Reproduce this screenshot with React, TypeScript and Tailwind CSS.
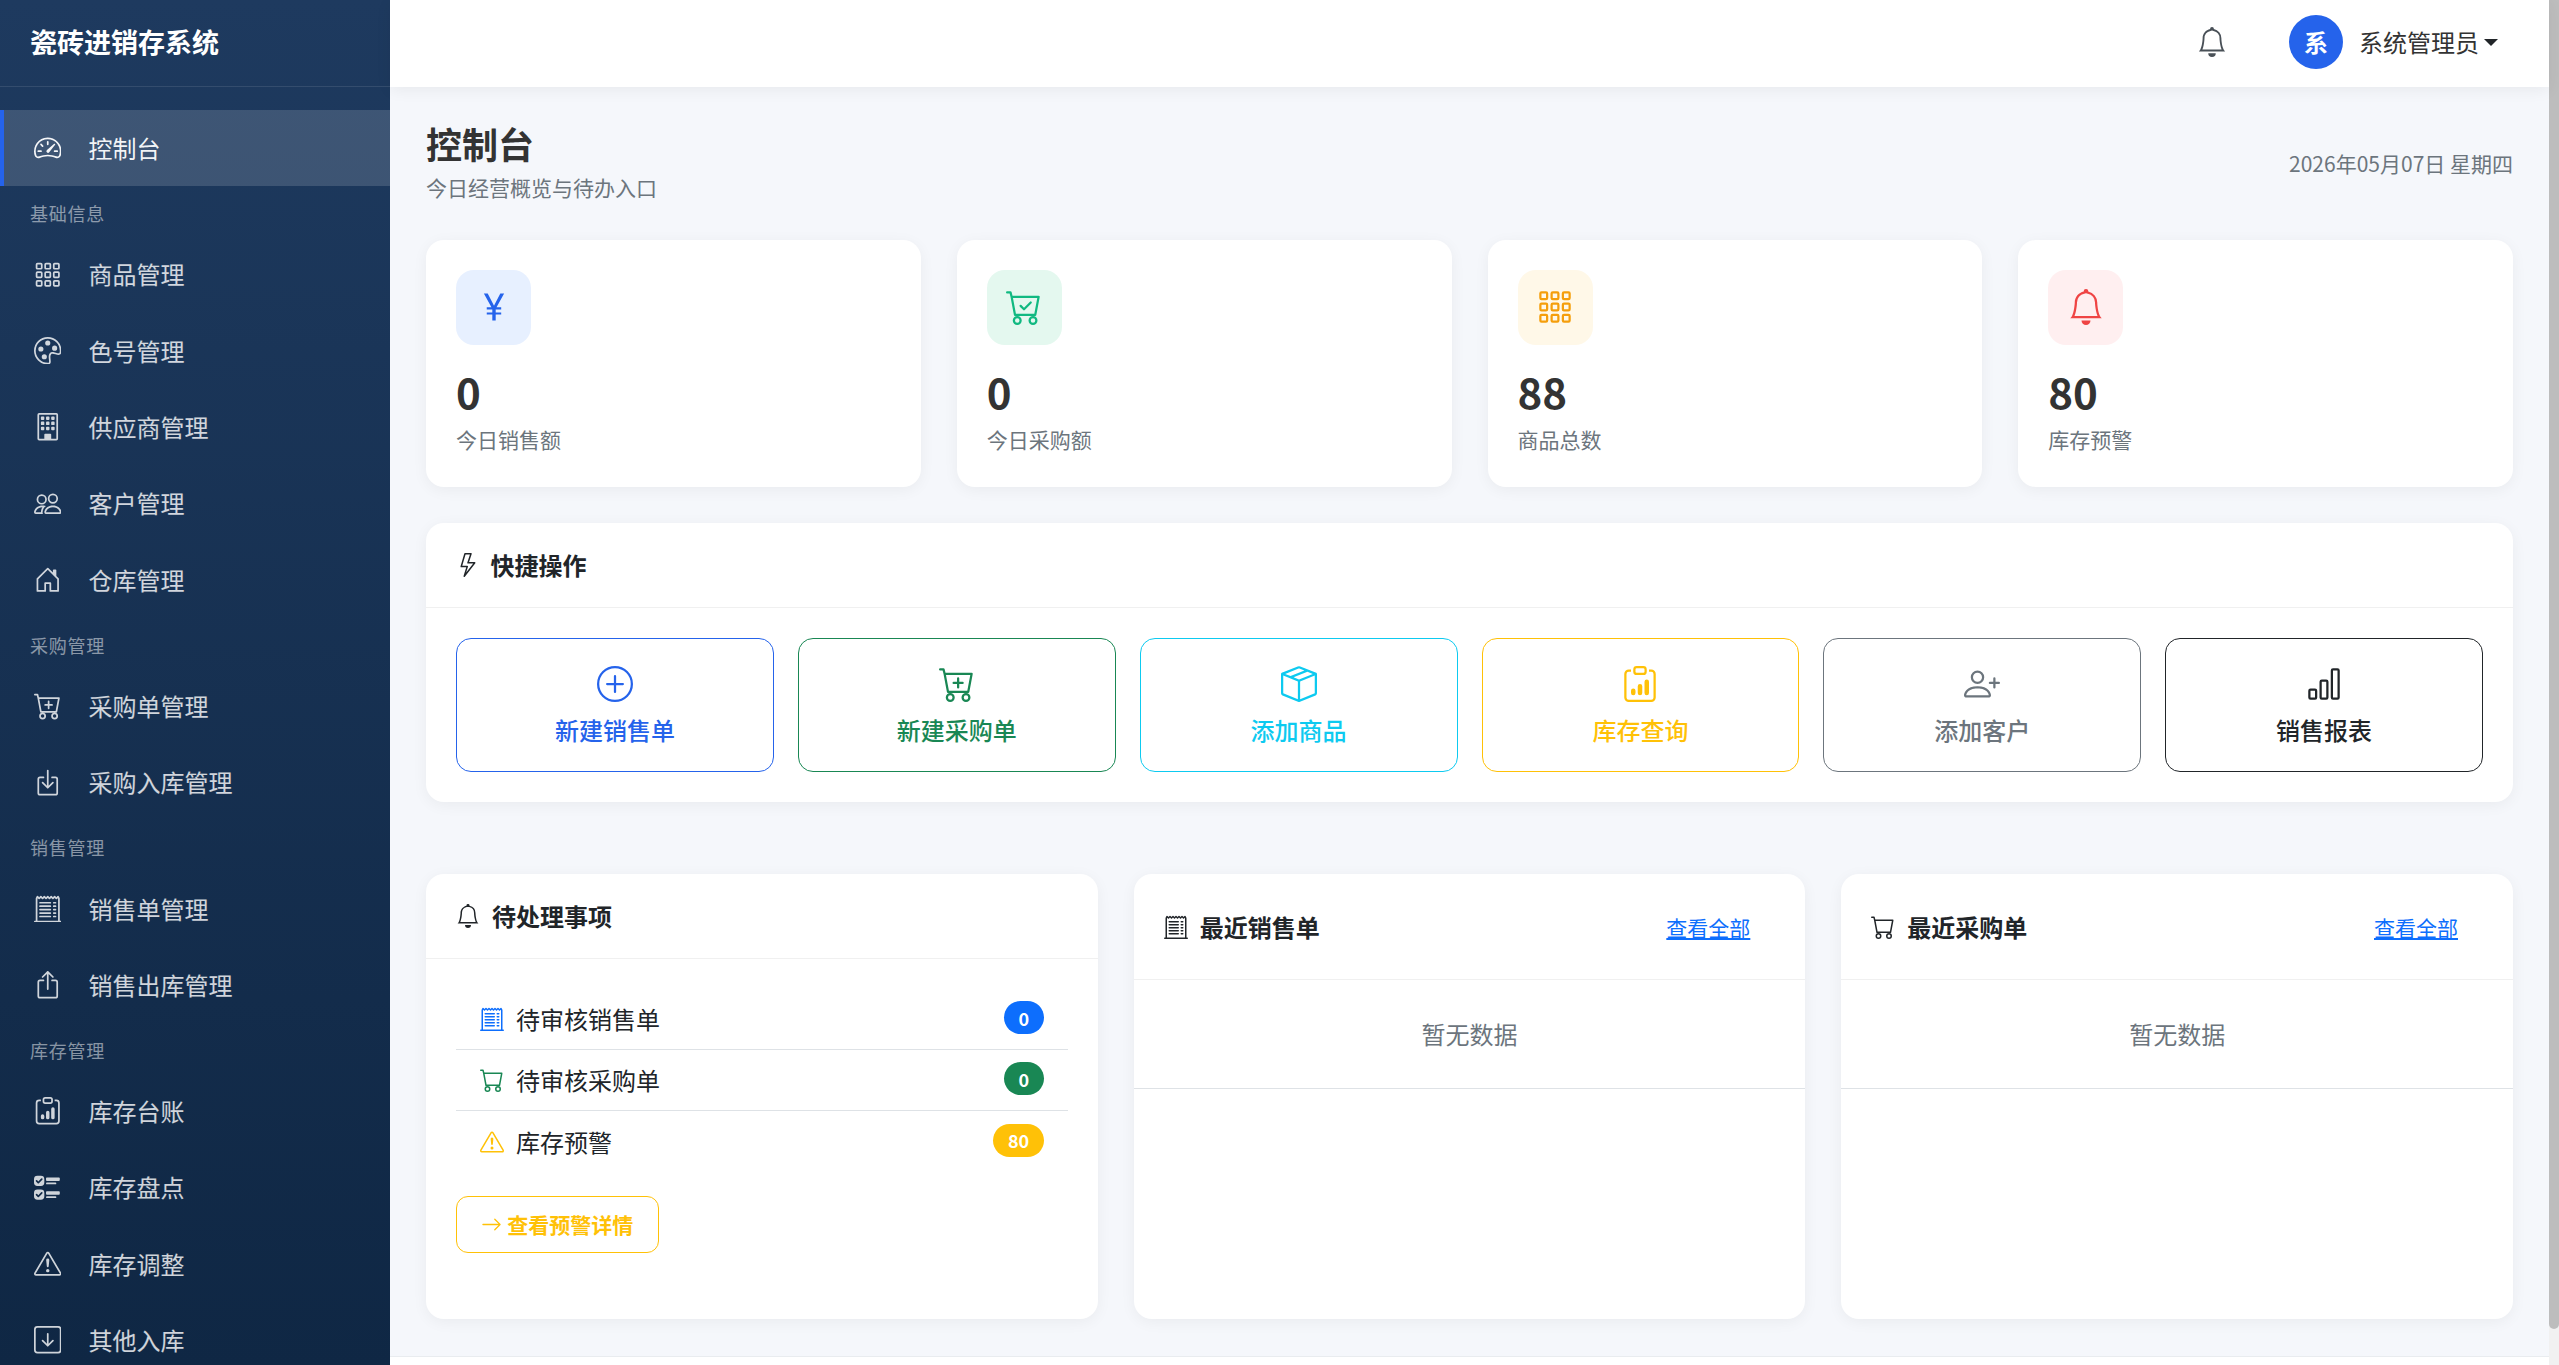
import React from "react";
import {
  BsSpeedometer2, BsGrid3X3Gap, BsPalette, BsBuilding, BsPeople, BsHouseDoor, BsCartPlus, BsBoxArrowInDown,
  BsReceiptCutoff, BsBoxArrowUp, BsClipboardData, BsUiChecks, BsExclamationTriangle, BsArrowDownSquare,
  BsBell, BsCurrencyYen, BsCartCheck, BsLightning, BsPlusCircle, BsBoxSeam, BsPersonPlus, BsBarChart, BsCart,
  BsArrowRight,
} from "react-icons/bs";

type NavEntry = { label: string; icon?: React.ComponentType<{ size?: number; className?: string }>; active?: boolean };

const nav: NavEntry[] = [
  { label: "控制台", icon: BsSpeedometer2, active: true },
  { label: "基础信息" },
  { label: "商品管理", icon: BsGrid3X3Gap },
  { label: "色号管理", icon: BsPalette },
  { label: "供应商管理", icon: BsBuilding },
  { label: "客户管理", icon: BsPeople },
  { label: "仓库管理", icon: BsHouseDoor },
  { label: "采购管理" },
  { label: "采购单管理", icon: BsCartPlus },
  { label: "采购入库管理", icon: BsBoxArrowInDown },
  { label: "销售管理" },
  { label: "销售单管理", icon: BsReceiptCutoff },
  { label: "销售出库管理", icon: BsBoxArrowUp },
  { label: "库存管理" },
  { label: "库存台账", icon: BsClipboardData },
  { label: "库存盘点", icon: BsUiChecks },
  { label: "库存调整", icon: BsExclamationTriangle },
  { label: "其他入库", icon: BsArrowDownSquare },
];

const stats = [
  { value: "0", label: "今日销售额", icon: BsCurrencyYen, box: "bg-[#e7f0ff] text-[#2563eb]" },
  { value: "0", label: "今日采购额", icon: BsCartCheck, box: "bg-[#e4f8ef] text-[#10b981]" },
  { value: "88", label: "商品总数", icon: BsGrid3X3Gap, box: "bg-[#fff8e8] text-[#f59e0b]" },
  { value: "80", label: "库存预警", icon: BsBell, box: "bg-[#ffeff0] text-[#ef4444]" },
];

const actions = [
  { label: "新建销售单", icon: BsPlusCircle, cls: "border-[#2563eb] text-[#2563eb]" },
  { label: "新建采购单", icon: BsCartPlus, cls: "border-[#198754] text-[#198754]" },
  { label: "添加商品", icon: BsBoxSeam, cls: "border-[#0dcaf0] text-[#0dcaf0]" },
  { label: "库存查询", icon: BsClipboardData, cls: "border-[#ffc107] text-[#ffc107]" },
  { label: "添加客户", icon: BsPersonPlus, cls: "border-[#6c757d] text-[#6c757d]" },
  { label: "销售报表", icon: BsBarChart, cls: "border-[#212529] text-[#212529]" },
];

const pending = [
  { label: "待审核销售单", count: "0", icon: BsReceiptCutoff, iconCls: "text-[#0d6efd]", badge: "bg-[#0d6efd]" },
  { label: "待审核采购单", count: "0", icon: BsCart, iconCls: "text-[#198754]", badge: "bg-[#198754]" },
  { label: "库存预警", count: "80", icon: BsExclamationTriangle, iconCls: "text-[#ffc107]", badge: "bg-[#ffc107]" },
];

const recent = [
  { title: "最近销售单", icon: BsReceiptCutoff },
  { title: "最近采购单", icon: BsCart },
];

const card = "bg-white rounded-[18px] shadow-[0_3px_15px_rgba(0,0,0,0.05)]";

export default function App() {
  return (
    <div className="flex h-screen w-full overflow-hidden bg-[#f5f7fb] font-['Noto_Sans_CJK_SC','Noto_Sans',sans-serif] text-[24px] leading-[36px] text-[#212529]">
      <aside className="flex h-full w-[390px] shrink-0 flex-col overflow-hidden bg-gradient-to-b from-[#1e3a5f] to-[#0f2744]">
        <div className="flex h-[87px] shrink-0 items-center border-b border-white/10 px-[30px] pb-[3px] text-[27px] font-bold text-white">
          瓷砖进销存系统
        </div>
        <nav className="shrink-0 pt-[23px]">
          {nav.map((n) =>
            n.icon ? (
              <div
                key={n.label}
                className={
                  n.active
                    ? "flex h-[76.3px] items-center border-l-[4.5px] border-[#2563eb] bg-white/15 pl-[25.5px] text-white/95"
                    : "flex h-[76.3px] items-center border-l-[4.5px] border-transparent pl-[25.5px] text-white/80"
                }
              >
                <span className="mr-[24px] flex w-[35px] justify-center pl-[1px]">
                  <n.icon size={27.5} />
                </span>
                {n.label}
              </div>
            ) : (
              <div key={n.label} className="h-[50px] pb-[9px] pl-[30px] pt-[14px] text-[18px] leading-[27px] tracking-[0.75px] text-white/50">
                {n.label}
              </div>
            ),
          )}
        </nav>
      </aside>

      <div className="flex h-full min-w-0 flex-1 flex-col">
        <header className="relative z-10 flex h-[87px] shrink-0 items-center justify-end bg-white pb-[3px] pr-[51px] shadow-[0_3px_15px_rgba(0,0,0,0.06)]">
          <BsBell size={30} className="mr-[62px] text-[#495057]" />
          <div className="mr-[16px] flex h-[54px] w-[54px] items-center justify-center rounded-full bg-[#2563eb] font-bold text-white">系</div>
          <span className="text-[#333333]">系统管理员</span>
          <span className="ml-[5px] h-0 w-0 border-x-[7px] border-t-[7px] border-x-transparent border-t-[#212529]" />
        </header>

        <main className="min-h-0 flex-1 overflow-hidden p-9">
          <div className="flex items-center justify-between">
            <div>
              <h1 className="-mt-[1.5px] text-[36px] font-bold leading-[43px] text-[#333333]">控制台</h1>
              <p className="mt-[7.5px] text-[21px] leading-[31.5px] text-[#6c757d]">今日经营概览与待办入口</p>
            </div>
            <div className="text-[21px] leading-[31.5px] text-[#6c757d]">2026年05月07日 星期四</div>
          </div>

          <div className="mt-9 grid grid-cols-4 gap-9">
            {stats.map((s) => (
              <div key={s.label} className={`${card} p-[30px]`}>
                <div className={`flex h-[75px] w-[75px] items-center justify-center rounded-[18px] ${s.box}`}>
                  <s.icon size={36} />
                </div>
                <div className="mt-[21px] text-[42px] font-bold leading-[50.5px] text-[#333333]">{s.value}</div>
                <div className="mb-[1px] mt-[8px] text-[21px] leading-[31.5px] text-[#6c757d]">{s.label}</div>
              </div>
            ))}
          </div>

          <section className={`${card} mt-9`}>
            <div className="flex h-[85.5px] items-center border-b-[1.5px] border-[#f0f0f0] px-[30px] font-semibold">
              <BsLightning size={24} className="mr-[10.5px]" />
              快捷操作
            </div>
            <div className="grid grid-cols-6 gap-6 p-[30px]">
              {actions.map((a) => (
                <div key={a.label} className={`flex h-[134px] flex-col items-center rounded-[15px] border-[1.5px] bg-white pt-[27px] font-medium ${a.cls}`}>
                  <a.icon size={36} />
                  <span className="mt-[10px]">{a.label}</span>
                </div>
              ))}
            </div>
          </section>

          <div className="mt-[72px] grid h-[444.5px] grid-cols-3 gap-9">
            <section className={card}>
              <div className="flex h-[85px] items-center border-b-[1.5px] border-[#f0f0f0] px-[30px] font-semibold">
                <BsBell size={24} className="mr-[12px] text-[#212529]" />
                待处理事项
              </div>
              <div className="p-[30px]">
                {pending.map((p, i) => (
                  <div
                    key={p.label}
                    className={
                      i < 2
                        ? "flex h-[61px] items-center justify-between border-b-[1.5px] border-[#dee2e6] pl-[24px] pr-[23.5px]"
                        : "flex h-[61px] items-center justify-between pl-[24px] pr-[23.5px]"
                    }
                  >
                    <span className="flex items-center">
                      <p.icon size={24} className={`mr-[12px] ${p.iconCls}`} />
                      {p.label}
                    </span>
                    <span className={`-mt-[3px] rounded-full px-[15px] py-[7.5px] text-[18px] font-bold leading-[18px] text-white ${p.badge}`}>{p.count}</span>
                  </div>
                ))}
                <div className="mt-[24px] flex h-[56.5px] w-[202.5px] items-center justify-center rounded-[12px] border-[1.5px] border-[#ffc107] text-[21px] font-semibold text-[#ffc107]">
                  <BsArrowRight size={21} className="mr-[5px]" />
                  查看预警详情
                </div>
              </div>
            </section>

            {recent.map((r) => (
              <section key={r.title} className={card}>
                <div className="flex h-[106px] items-center justify-between border-b-[1.5px] border-[#f0f0f0] pl-[30px] pr-[55px] pt-[1.5px]">
                  <span className="flex items-center font-semibold">
                    <r.icon size={24} className="mr-[12px]" />
                    {r.title}
                  </span>
                  <span className="text-[21px] text-[#0d6efd] underline">查看全部</span>
                </div>
                <div className="flex h-[109px] items-center justify-center border-b-[1.5px] border-[#dee2e6] text-[#6c757d]">暂无数据</div>
              </section>
            ))}
          </div>
        </main>

        <footer className="h-[9.5px] shrink-0 border-t-[1.5px] border-[#e9ecef] bg-white" />
      </div>

      <div className="h-full w-[10px] shrink-0 bg-[#f1f1f1]">
        <div className="h-[1329px] rounded-b-[5px] bg-[#bdbdbd]" />
      </div>
    </div>
  );
}
